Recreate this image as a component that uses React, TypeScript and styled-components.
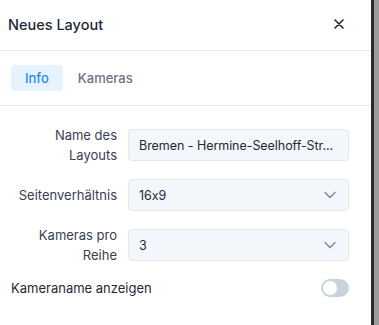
import React from "react";
import styled, { createGlobalStyle } from "styled-components";

const Global = createGlobalStyle`
  html, body { margin: 0; padding: 0; height: 100%; }
  body {
    background: #9b9b9b;
    font-family: Inter, "Noto Sans", sans-serif;
    font-feature-settings: "calt" 0;
    -webkit-font-smoothing: antialiased;
  }
  #root { height: 100%; }
  * { box-sizing: border-box; }
  button { font-feature-settings: "calt" 0; }
`;

const Page = styled.div`
  display: flex;
  height: 325px;
`;

const Panel = styled.div`
  width: 374px;
  height: 100%;
  background: #ffffff;
  border-right: 3px solid #2b2b2b;
  display: flex;
  flex-direction: column;
`;

const Header = styled.div`
  height: 51px;
  display: flex;
  align-items: center;
  justify-content: space-between;
  padding: 0 26px 2px 8px;
  border-bottom: 1px solid #e4e8ee;
`;

const Title = styled.h2`
  margin: 0;
  font-size: 14.5px;
  font-weight: 500;
  color: #1f2937;
  letter-spacing: 0;
`;

const CloseButton = styled.button`
  border: none;
  background: transparent;
  padding: 0;
  width: 12px;
  height: 12px;
  display: flex;
  align-items: center;
  justify-content: center;
  color: #1f2937;
  cursor: pointer;
`;

const TabBar = styled.div`
  height: 55px;
  display: flex;
  align-items: center;
  gap: 4px;
  padding: 0 11px 1px;
  border-bottom: 1px solid #e4e8ee;
`;

const Tab = styled.button<{ $active?: boolean }>`
  border: none;
  height: 26px;
  padding: 0 ${(p) => (p.$active ? "14px" : "11px")};
  border-radius: 4px;
  font-family: inherit;
  font-size: 13px;
  font-weight: 500;
  background: ${(p) => (p.$active ? "#e6f2fe" : "transparent")};
  color: ${(p) => (p.$active ? "#2b8bec" : "#6b7280")};
`;

const Form = styled.div`
  display: flex;
  flex-direction: column;
  gap: 14px;
  padding: 19px 22px 0 11px;
`;

const Row = styled.div`
  display: grid;
  grid-template-columns: 106px minmax(0, 1fr);
  column-gap: 11px;
  align-items: center;
`;

const Label = styled.label`
  text-align: right;
  font-size: 13px;
  line-height: 20px;
  color: #374151;
`;

const Field = styled.div`
  position: relative;
  min-width: 0;
  height: 32px;
  border: 1px solid #e2e8f0;
  border-radius: 4px;
  background: #f3f6fb;
  display: flex;
  align-items: center;
  padding: 0 6px 0 10px;
`;

const Value = styled.span`
  flex: 1;
  min-width: 0;
  font-size: 12.5px;
  letter-spacing: -0.05px;
  color: #1f2937;
  white-space: nowrap;
  overflow: hidden;
  text-overflow: ellipsis;
`;

const Chevron = styled.span`
  display: flex;
  color: #7b8494;
  margin-right: 2px;
`;

const ToggleRow = styled.div`
  display: flex;
  align-items: center;
  justify-content: space-between;
  height: 18px;
`;

const ToggleLabel = styled.span`
  font-size: 13px;
  color: #1f2937;
`;

const Switch = styled.span<{ $on?: boolean }>`
  position: relative;
  width: 28px;
  height: 18px;
  border-radius: 9px;
  background: ${(p) => (p.$on ? "#2b8bec" : "#c8d2df")};
`;

const Knob = styled.span<{ $on?: boolean }>`
  position: absolute;
  top: 2px;
  left: ${(p) => (p.$on ? "12px" : "2px")};
  width: 14px;
  height: 14px;
  border-radius: 50%;
  background: #ffffff;
`;

const ChevronIcon = () => (
  <svg width="20" height="20" viewBox="0 0 24 24" fill="none" stroke="currentColor" strokeWidth="1.6" strokeLinecap="round" strokeLinejoin="round">
    <path d="m6 9 6 6 6-6" />
  </svg>
);

const SelectField = ({ value }: { value: string }) => (
  <Field>
    <Value>{value}</Value>
    <Chevron>
      <ChevronIcon />
    </Chevron>
  </Field>
);

export default function App() {
  return (
    <>
      <Global />
      <Page>
        <Panel>
          <Header>
            <Title>Neues Layout</Title>
            <CloseButton aria-label="Schließen">
              <svg width="10" height="10" viewBox="0 0 10 10" stroke="currentColor" strokeWidth="1.6" strokeLinecap="round">
                <path d="M1 1l8 8M9 1l-8 8" />
              </svg>
            </CloseButton>
          </Header>
          <TabBar>
            <Tab $active>Info</Tab>
            <Tab>Kameras</Tab>
          </TabBar>
          <Form>
            <Row>
              <Label>Name des Layouts</Label>
              <Field>
                <Value>Bremen - Hermine-Seelhoff-Str...</Value>
              </Field>
            </Row>
            <Row>
              <Label>Seitenverhältnis</Label>
              <SelectField value="16x9" />
            </Row>
            <Row>
              <Label>Kameras pro Reihe</Label>
              <SelectField value="3" />
            </Row>
            <ToggleRow>
              <ToggleLabel>Kameraname anzeigen</ToggleLabel>
              <Switch>
                <Knob />
              </Switch>
            </ToggleRow>
          </Form>
        </Panel>
      </Page>
    </>
  );
}
